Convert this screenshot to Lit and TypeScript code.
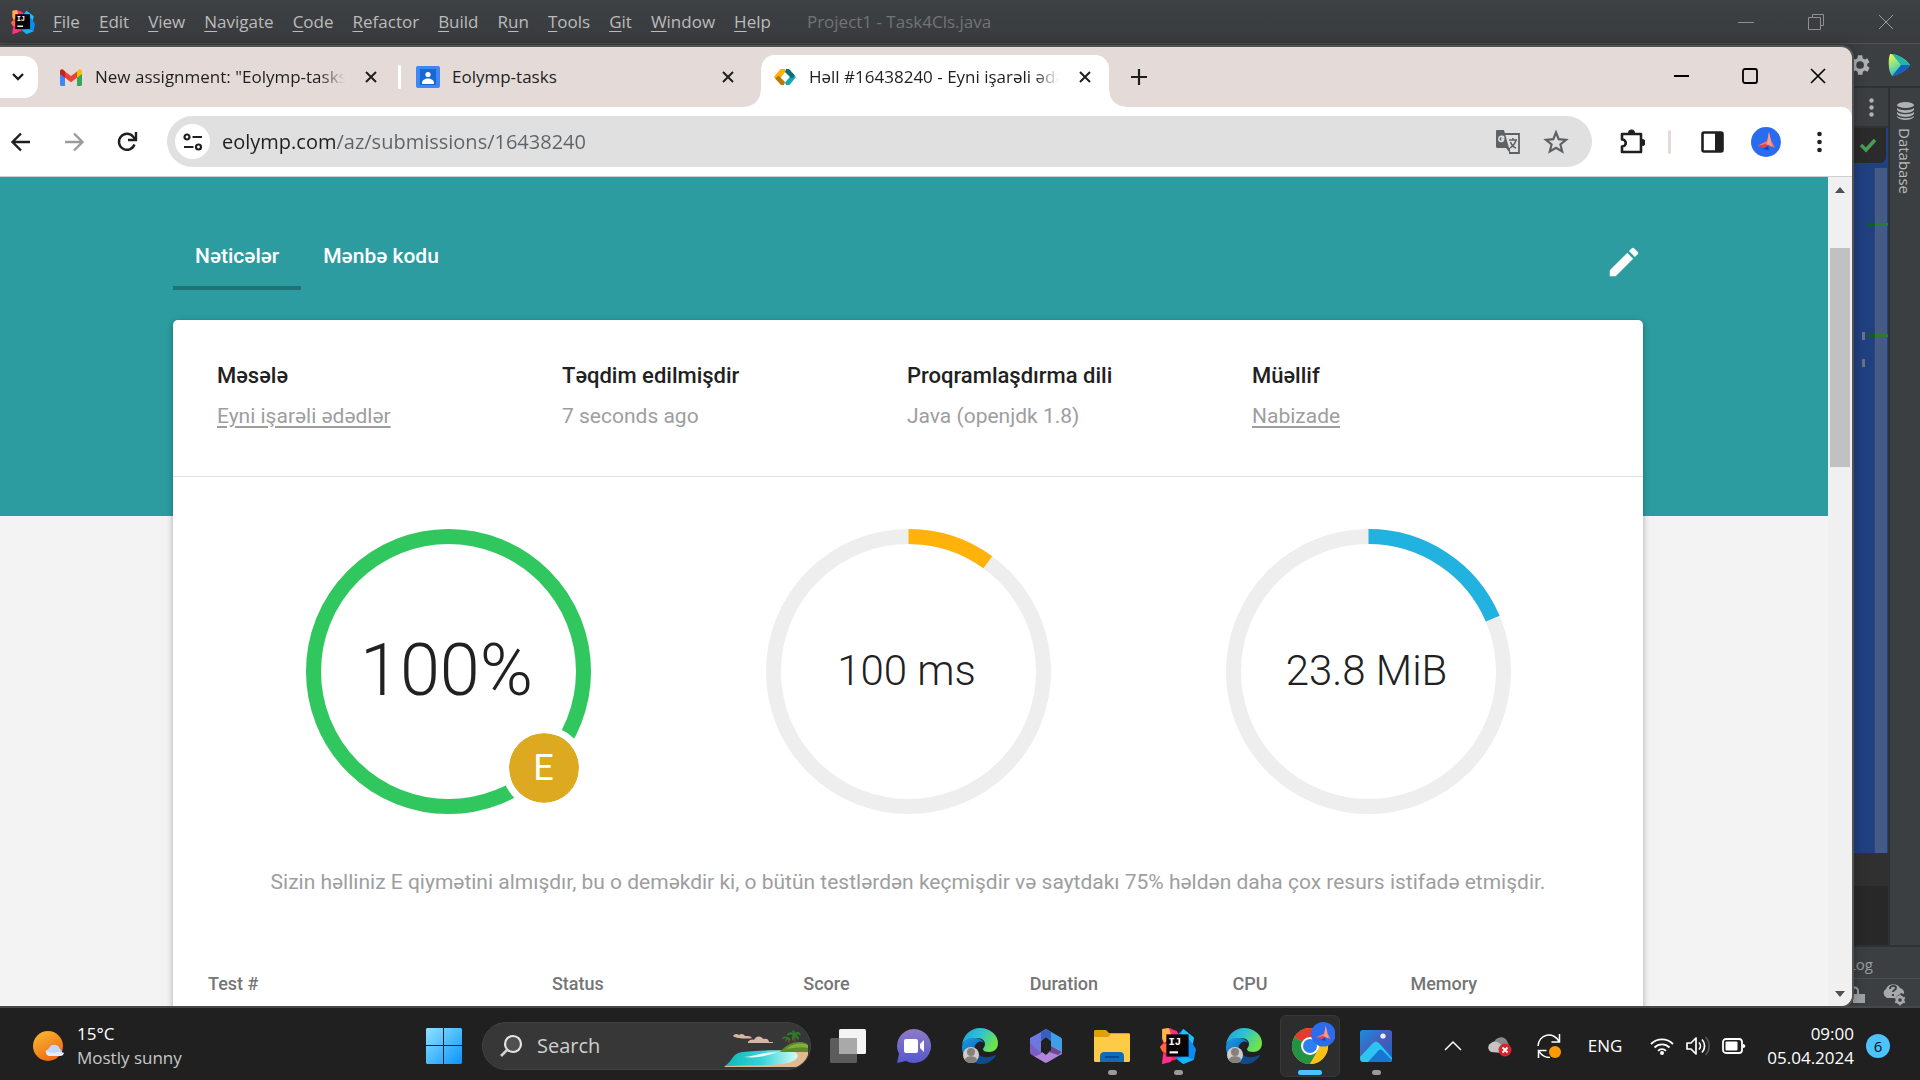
import { LitElement, html, svg, css, type SVGTemplateResult } from "lit";
import { customElement, property } from "lit/decorators.js";

const icon = (w: number, h: number, box: string, body: SVGTemplateResult) =>
  html`<svg width=${w} height=${h} viewBox=${box} fill="none" aria-hidden="true">${body}</svg>`;

/* ---------- shared artwork ---------- */

const ideLogo = (size: number) => icon(size, size, "0 0 34 34", svg`
  <path d="M2 1 9 0l8 8-2 22-4 1-9 3 1-11-3-5 3-4-1-4z" fill="#f9235f"/>
  <path d="M2 1 8 0l5 7-9 7-2-4z" fill="#fdb44a"/>
  <path d="M3 15h6v10l-7-3-2-4z" fill="#fc6c3b"/>
  <path d="M9 0l7 3 3 6-8 2z" fill="#fe2f7c"/>
  <path d="M17 6l5-5 5 4 5 4-1 6 3 5-2 10-10 4-7-5z" fill="#0a8bf5"/>
  <path d="M22 1l5 4 5 4-1 6-6-7-6-2z" fill="#19c3f7"/>
  <path d="M16 29l8-2 8 3-10 4z" fill="#12b5f5"/>
  <path d="M2 34l1-9 9 3-2 4z" fill="#ff318c"/>
  <rect x="6" y="6" width="21" height="21" fill="#0a0406"/>
  <text x="8" y="16" font-family="Liberation Mono, monospace" font-weight="700" font-size="10" fill="#fff">IJ</text>
  <rect x="9" y="22" width="8" height="2" fill="#fff"/>`);

const closeGlyph = icon(12, 12, "0 0 12 12", svg`<path d="M1 1l10 10M11 1L1 11" stroke="#1f1f1f" stroke-width="2"/>`);

const bird = svg`
  <circle cx="15" cy="15" r="15" fill="#2a6cf0"/>
  <path d="M6 19l10-5 2-9 2 8 4 8-6-3z" fill="#f9776b"/>
  <path d="M6 19l9-2 3 5z" fill="#d8455a"/>
  <path d="M18 5l-2 12 5 3z" fill="#ff9c8a"/>
  <path d="M12 22l5-3 1 4z" fill="#1846a8"/>`;

const edgeLogo = icon(36, 36, "0 0 36 36", svg`
  <defs>
    <linearGradient id="eg1" x1="0" y1="0" x2="1" y2="0.5"><stop offset="0" stop-color="#1b9de0"/><stop offset=".5" stop-color="#2fc2d0"/><stop offset="1" stop-color="#6fe34b"/></linearGradient>
    <linearGradient id="eg2" x1="0" y1="0" x2="0.6" y2="1"><stop offset="0" stop-color="#1a9fe6"/><stop offset="1" stop-color="#0a56ae"/></linearGradient>
  </defs>
  <path d="M0 17C1 7 9 0 18 0c10 0 18 7 18 15 0 6-4 9-9 9-4 0-6-1-6-3 0-1 2-2 2-5 0-4-4-6-8-6C8 10 2 12 0 17z" fill="url(#eg1)"/>
  <path d="M0 18c2-6 7-9 12-8 5 0 9 2 10 5-2-2-5-2-7 0-4 3-3 11 2 15 3 2 5 3 5 5-2 1-5 1-8 0C5 33-1 26 0 18z" fill="url(#eg2)"/>
  <path d="M14 20c0 6 6 10 12 9 3 0 5-1 7-2 1 0 1 1 0 2-4 5-10 8-16 7-4-3-6-10-3-16z" fill="#114a8b"/>
  <circle cx="9" cy="27" r="8" fill="#cfccc9"/><circle cx="9" cy="24" r="4" fill="#85807c"/>
  <path d="M3 32c0-5 12-5 12 0-3 4-9 4-12 0z" fill="#85807c"/>`);

/* ---------- IDE window behind the browser ---------- */

@customElement("ide-window")
export class IdeWindow extends LitElement {
  static styles = css`
    :host { display: flex; flex-direction: column; background: #3c3f41; color: #bbb;
      font: 17px/24px "Open Sans", "Noto Sans", sans-serif; min-width: 0; isolation: isolate; }
    button { all: unset; cursor: default; }
    svg { display: block; flex: none; }
    .title { height: 44px; display: flex; align-items: center; gap: 18px; padding: 0 26px 0 11px;
      background: linear-gradient(#3d4144, #393b3d); border-bottom: 1px solid #505254; box-sizing: border-box; }
    .menu { display: flex; gap: 19px; }
    .menu u { text-underline-offset: 3px; text-decoration-thickness: 1px; }
    .project { color: #717476; margin-left: 18px; }
    .frame { margin-left: auto; display: flex; align-items: center; gap: 54px; }
    .tools { height: 44px; display: flex; align-items: center; justify-content: flex-end; gap: 18px;
      padding-right: 10px; border-bottom: 2px solid #2f3132; box-sizing: border-box; }
    .body { flex: 1; display: flex; min-height: 0; }
    .left { flex: 1; display: flex; flex-direction: column; border-right: 2px solid #2f3132; }
    .tabs { height: 40px; display: flex; align-items: center; justify-content: flex-end; padding-right: 14px; border-bottom: 2px solid #313335; box-sizing: border-box; }
    .editor { flex: 1; display: flex; justify-content: flex-end; background: #204080; position: relative; }
    .inspect { position: absolute; top: 0; right: 2px; width: 60px; height: 35px; background: #2b2b2b;
      display: flex; align-items: center; justify-content: flex-end; padding-right: 9px; box-sizing: border-box; border-bottom-right-radius: 6px; }
    .track { width: 13px; margin: 40px 1px 0 0; background: #465a86; border-left: 1px solid #2d4577; box-sizing: border-box; }
    .mark { position: absolute; right: 0; width: 20px; height: 3px; background: linear-gradient(90deg, #0b6410 35%, #2d7a35 35%); }
    .mark.one { top: 95px; } .mark.two { top: 206px; }
    .dash { position: absolute; right: 23px; width: 3px; height: 8px; background: #69748a; }
    .dash.one { top: 204px; } .dash.two { top: 231px; }
    .gutter { height: 33px; background: #303030; }
    .console { height: 59px; background: #282828; }
    .stripe { width: 30px; display: flex; flex-direction: column; align-items: center; padding-top: 14px; gap: 8px; box-sizing: border-box; }
    .stripe span { writing-mode: vertical-rl; font-size: 15px; line-height: 20px; }
    .log { height: 34px; display: flex; align-items: center; justify-content: flex-end; padding: 2px 47px 0 0;
      border-top: 2px solid #2f3132; border-bottom: 1px solid #4b4e50; box-sizing: border-box; font-size: 15px; color: #9b9d9e; }
    .status { height: 27px; display: flex; align-items: center; justify-content: flex-end; gap: 17px; padding: 4px 14px 0 0; box-sizing: border-box; }
  `;

  private menus = ["File", "Edit", "View", "Navigate", "Code", "Refactor", "Build", "Run", "Tools", "Git", "Window", "Help"];

  private menuItem(name: string) {
    const at = name === "Run" ? 1 : 0;
    return html`<button>${name.slice(0, at)}<u>${name[at]}</u>${name.slice(at + 1)}</button>`;
  }

  render() {
    return html`
      <header class="title">
        ${ideLogo(24)}
        <nav class="menu">${this.menus.map((m) => this.menuItem(m))}</nav>
        <span class="project">Project1 - Task4Cls.java</span>
        <div class="frame">
          <button aria-label="Minimize">${icon(16, 16, "0 0 16 16", svg`<path d="M0 8.500h16" stroke="#8d8f90"/>`)}</button>
          <button aria-label="Restore">${icon(16, 16, "0 0 16 16", svg`<path d="M.5 3.500h12v12H.500zM4.500 3V.500h11v11H13" stroke="#8d8f90"/>`)}</button>
          <button aria-label="Close">${icon(16, 16, "0 0 16 16", svg`<path d="M1 1l14 14M15 1L1 15" stroke="#9a9c9d"/>`)}</button>
        </div>
      </header>
      <div class="tools">
        ${icon(22, 22, "2 2 20 20", svg`<path fill="#afb1b3" fill-rule="evenodd" d="M19.400 13a7 7 0 0 0 0-2l2.100-1.600-2-3.500-2.500 1a7 7 0 0 0-1.700-1L15 3.200h-4l-.4 2.700a7 7 0 0 0-1.700 1l-2.500-1-2 3.500L6.600 11a7 7 0 0 0 0 2l-2.100 1.600 2 3.500 2.500-1a7 7 0 0 0 1.700 1l.4 2.700h4l.4-2.700a7 7 0 0 0 1.700-1l2.500 1 2-3.500zM13 15.500a3.500 3.500 0 1 1 0-7 3.500 3.500 0 0 1 0 7z"/>`)}
        ${icon(22, 24, "0 0 22 24", svg`
          <defs><linearGradient id="tb" x1="0" y1="0" x2=".6" y2="1"><stop offset="0" stop-color="#fcf84a"/><stop offset=".5" stop-color="#7fe08c"/><stop offset="1" stop-color="#16a9e8"/></linearGradient></defs>
          <path d="M2 1C0 6 0 18 4 23c8-2 15-6 18-11C17 5 9 1 2 1z" fill="url(#tb)"/>
          <path d="M13 12h9c-4 6-10 9-18 11z" fill="#1062c4"/><path d="M4 1l9 11h9C17 6 11 2 4 1z" fill="#1fb8a8"/>`)}
      </div>
      <div class="body">
        <div class="left">
          <div class="tabs">${icon(5, 19, "0 0 5 19", svg`<g fill="#afb1b3"><circle cx="2.500" cy="2.500" r="2.200"/><circle cx="2.500" cy="9.500" r="2.200"/><circle cx="2.500" cy="16.500" r="2.200"/></g>`)}</div>
          <div class="editor">
            <div class="track"></div>
            <div class="inspect">${icon(18, 15, "0 0 18 15", svg`<path d="M2 7l5 5L16 2" stroke="#499c54" stroke-width="3.500"/>`)}</div>
            <i class="mark one"></i><i class="mark two"></i><i class="dash one"></i><i class="dash two"></i>
          </div>
          <div class="gutter"></div>
          <div class="console"></div>
        </div>
        <aside class="stripe">
          ${icon(17, 18, "0 0 17 18", svg`<ellipse cx="8.500" cy="3" rx="8.500" ry="3" fill="#afb1b3"/><path d="M0 6c3 3 14 3 17 0v2c-3 4-14 4-17 0zM0 10c3 3 14 3 17 0v2c-3 4-14 4-17 0zM0 14c3 3 14 3 17 0v1c-3 4-14 4-17 0z" fill="#afb1b3"/>`)}
          <span>Database</span>
        </aside>
      </div>
      <div class="log">Log</div>
      <div class="status">
        ${icon(15, 18, "0 0 15 18", svg`<path d="M1 8V5a3.500 3.500 0 0 1 7 0v4" stroke="#9fa1a2" stroke-width="2"/><path d="M3 8h12v9H3z" fill="#9fa1a2"/>`)}
        ${icon(24, 22, "0 0 24 22", svg`<path d="M5 14a5 5 0 0 1-1-9 8 8 0 0 1 14-1 5 5 0 0 1 4 6l-3-1-6 5z" fill="#a7a9aa"/>
          <path d="M8 5c0-4 6-4 6-1 0 2-3 2-3 4M11 10v2" stroke="#3c3f41" stroke-width="2"/>
          <circle cx="18" cy="16" r="3.300" stroke="#a7a9aa" stroke-width="2.500"/><path d="M18 10.500v11M13 13.500l10 5M23 13.500l-10 5" stroke="#a7a9aa" stroke-width="1.600"/><circle cx="18" cy="16" r="1.800" fill="#3c3f41"/>`)}
      </div>`;
  }
}

/* ---------- ring gauge ---------- */

@customElement("ring-gauge")
export class RingGauge extends LitElement {
  @property({ type: Number }) value = 0;
  @property() color = "#000";
  @property() label = "";
  @property() grade = "";

  static styles = css`
    :host { display: grid; position: relative; width: 285px; height: 285px; place-items: center; }
    svg, .text { grid-area: 1 / 1; }
    .text { font-weight: 300; font-size: 42px; line-height: 52px; color: #212121; padding: 0 3px 2px 0; }
    .text.big { font-size: 72px; line-height: 84px; }
    .grade { position: absolute; right: 5px; bottom: 4px; width: 70px; height: 70px; border: 7px solid #fff; border-radius: 50%;
      background: #dda920 padding-box; color: #fff; font-size: 36px; line-height: 70px; text-align: center; }
  `;

  render() {
    return html`
      <svg width="285" height="285" viewBox="0 0 285 285" fill="none" stroke-width="15" aria-hidden="true">
        <circle cx="142.500" cy="142.500" r="135" stroke="#eee" />
        <circle cx="142.500" cy="142.500" r="135" stroke=${this.color} pathLength="100"
          stroke-dasharray="${this.value} ${100 - this.value}" transform="rotate(-90 142.500 142.500)" />
      </svg>
      <span class="text ${this.grade ? "big" : ""}">${this.label}</span>
      ${this.grade ? html`<span class="grade">${this.grade}</span>` : null}`;
  }
}

/* ---------- submission page ---------- */

@customElement("submission-page")
export class SubmissionPage extends LitElement {
  static styles = css`
    :host { display: block; overflow: hidden; min-width: 0; padding: 45px 12px 0 0;
      background: linear-gradient(#2c9ca0 339px, #f3f3f3 339px); font: 21px/30px Roboto, sans-serif; color: #212121; }
    .wrap { max-width: 1470px; margin: 0 auto; }
    .top { display: flex; align-items: center; justify-content: space-between; }
    nav { display: flex; }
    .tab { color: #fff; text-decoration: none; font-weight: 500; padding: 19px 22px 15px 22px; border-bottom: 4px solid transparent; }
    .tab.on { border-color: #207478; }
    .edit { all: unset; margin-top: 12px; }
    svg { display: block; }
    .card { margin-top: 30px; background: #fff; border-radius: 5px; box-shadow: 0 2px 6px rgba(0, 0, 0, .3); padding-bottom: 80px; }
    dl { margin: 0; display: grid; grid-template-columns: repeat(4, 1fr); padding: 36px 46px 40px 44px; line-height: 40px; border-bottom: 1px solid #e0e0e0; }
    dt { font-weight: 500; font-size: 22px; }
    dd { margin: 0; color: #9e9e9e; }
    dd a { color: inherit; text-underline-offset: 3px; }
    .gauges { display: grid; grid-template-columns: repeat(3, 1fr); justify-items: center; padding: 52px 45px 0; }
    p { margin: 53px 0 0; text-align: center; color: #9e9e9e; }
    table { width: 100%; margin-top: 63px; border-collapse: collapse; table-layout: fixed; font-size: 18px; line-height: 24px; color: #757575; }
    th { box-sizing: border-box; text-align: left; font-weight: 500; padding: 12px 0 12px 35px; }
    .c1 { width: 23.4%; } .c2 { width: 17.1%; } .c3 { width: 15.4%; } .c4 { width: 13.8%; } .c5 { width: 12.1%; }
  `;

  render() {
    return html`
      <div class="wrap">
        <div class="top">
          <nav><a class="tab on" href="#results">Nəticələr</a><a class="tab" href="#source">Mənbə kodu</a></nav>
          <button class="edit" aria-label="Redaktə et">${icon(38, 38, "0 0 24 24", svg`<path fill="#fff" d="M3 17.250V21h3.750L17.810 9.940l-3.750-3.750L3 17.250zM20.710 7.040a1 1 0 0 0 0-1.410l-2.340-2.340a1 1 0 0 0-1.410 0l-1.830 1.830 3.750 3.750 1.830-1.830z"/>`)}</button>
        </div>
        <main class="card">
          <dl>
            <div><dt>Məsələ</dt><dd><a href="#problem">Eyni işarəli ədədlər</a></dd></div>
            <div><dt>Təqdim edilmişdir</dt><dd>7 seconds ago</dd></div>
            <div><dt>Proqramlaşdırma dili</dt><dd>Java (openjdk 1.8)</dd></div>
            <div><dt>Müəllif</dt><dd><a href="#author">Nabizade</a></dd></div>
          </dl>
          <div class="gauges">
            <ring-gauge value="100" color="#30c75e" label="100%" grade="E"></ring-gauge>
            <ring-gauge value="10" color="#ffb20a" label="100 ms"></ring-gauge>
            <ring-gauge value="18.600" color="#22b2e0" label="23.8 MiB"></ring-gauge>
          </div>
          <p>Sizin həlliniz E qiymətini almışdır, bu o deməkdir ki, o bütün testlərdən keçmişdir və saytdakı 75% həldən daha çox resurs istifadə etmişdir.</p>
          <table>
            <thead><tr>
              <th class="c1">Test #</th><th class="c2">Status</th><th class="c3">Score</th>
              <th class="c4">Duration</th><th class="c5">CPU</th><th>Memory</th>
            </tr></thead>
          </table>
        </main>
      </div>`;
  }
}

/* ---------- browser window ---------- */

@customElement("browser-window")
export class BrowserWindow extends LitElement {
  static styles = css`
    :host { display: flex; flex-direction: column; background: #e4dbd8; border-radius: 0 11px 11px 0; overflow: hidden;
      box-shadow: 0 0 0 2px #505254, 0 0 14px rgba(0, 0, 0, .4); font: 17px/24px "Open Sans", "Noto Sans", sans-serif; color: #1f1f1f; min-width: 0; }
    button { all: unset; cursor: default; display: grid; place-items: center; flex: none; }
    svg { display: block; flex: none; }
    .strip { height: 60px; display: flex; padding-top: 8px; box-sizing: border-box; }
    .search-tabs { width: 38px; height: 42px; margin-top: 1px; background: #fff; border-radius: 0 14px 14px 0; padding-right: 3px; box-sizing: border-box; }
    .tab { display: flex; align-items: center; height: 44px; box-sizing: border-box; min-width: 0; }
    .tab .name { flex: 1; white-space: nowrap; overflow: hidden; }
    .tab.mail { width: 344px; padding: 0 0 0 22px; gap: 13px; margin-right: 16px; }
    .tab.class { width: 346px; padding: 0 13px 0 15px; gap: 12px; margin-right: 14px; }
    .tab.mail .name, .tab.active .name { -webkit-mask-image: linear-gradient(90deg, #000 225px, transparent 250px); }
    .tab.mail .name { flex: 0 0 250px; }
    .sep { width: 3px; height: 24px; border-radius: 2px; background: #fff; }
    .tab.active { width: 348px; height: 52px; background: #fff; border-radius: 14px 14px 0 0; padding: 0 18px 8px 13px; gap: 13px; position: relative; }
    .tab.active .name { flex: 0 0 250px; }
    .tab.active button { margin-left: auto; }
    .tab.active::before, .tab.active::after { content: ""; position: absolute; bottom: 0; width: 16px; height: 16px; }
    .tab.active::before { right: 100%; background: radial-gradient(circle at 0 0, transparent 15px, #fff 16px); }
    .tab.active::after { left: 100%; background: radial-gradient(circle at 100% 0, transparent 15px, #fff 16px); }
    .tab.mail button { margin-left: 7px; }
    .plus { width: 20px; height: 44px; margin-left: 20px; }
    .window { margin-left: auto; display: flex; gap: 52px; padding-right: 26px; height: 42px; }
    .bar { height: 70px; background: #fff; border-bottom: 1px solid #cfcfcf; border-radius: 0 10px 0 0; box-sizing: border-box;
      display: flex; align-items: center; padding: 0 30px 0 10px; }
    .nav { display: flex; gap: 31px; margin-right: 29px; }
    .omni { flex: 1; height: 51px; border-radius: 26px; background: #e0e0e0; display: flex; align-items: center; padding: 0 23px 0 8px; min-width: 0; }
    .site { width: 35px; height: 35px; border-radius: 50%; background: #fff; }
    .omni input { all: unset; flex: 1; min-width: 0; margin-left: 12px; font-size: 20px; line-height: 30px; color: transparent;
      background: linear-gradient(90deg, #1f1f1f 113px, #5f6265 113px); -webkit-background-clip: text; background-clip: text; }
    .page-tools { display: flex; gap: 22px; align-items: center; }
    .right { display: flex; align-items: center; margin-left: 27px; }
    .line { width: 3px; height: 24px; border-radius: 2px; background: #e4dbd8; margin: 0 30px 0 23px; }
    .panel { margin-right: 27px; } .me { margin-right: 36px; }
    .view { flex: 1; display: flex; min-height: 0; }
    submission-page { flex: 1; }
    .scroll { width: 24px; background: #f0f0f0; display: flex; flex-direction: column; align-items: center; padding: 10px 0 9px; box-sizing: border-box; }
    .thumb { width: 20px; height: 219px; background: #c1c1c1; margin-top: 55px; }
    .down { margin-top: auto; }
  `;

  render() {
    return html`
      <div class="strip">
        <button class="search-tabs" aria-label="Search tabs">${icon(14, 10, "0 0 14 10", svg`<path d="M2 2l5 5 5-5" stroke="#1f1f1f" stroke-width="2.400"/>`)}</button>
        <div class="tab mail">
          ${icon(22, 17, "0 0 22 17", svg`<path d="M0 3l5 3v11H1.500A1.500 1.500 0 0 1 0 15.500z" fill="#4285f4"/><path d="M22 3l-5 3v11h3.500a1.500 1.500 0 0 0 1.500-1.500z" fill="#34a853"/><path d="M5 2.500l6 4.500 6-4.500v6.300L11 13.300 5 8.800z" fill="#ea4335"/><path d="M17 2.300l1.800-1.500C20.200-.3 22 .7 22 2.500V5l-5 3.800z" fill="#fbbc04"/><path d="M5 2.300L3.200.800C1.800-.3 0 .7 0 2.500V5l5 3.800z" fill="#c5221f"/>`)}
          <span class="name">New assignment: "Eolymp-tasks"</span>
          <button aria-label="Close tab">${closeGlyph}</button>
        </div>
        <div class="tab"><i class="sep"></i></div>
        <div class="tab class">
          ${icon(24, 22, "0 0 24 22", svg`<rect width="24" height="22" rx="2" fill="#4285f4"/><rect x="4" y="3" width="16" height="16" fill="#1967d2"/><circle cx="12" cy="8.500" r="2.600" fill="#fff"/><path d="M6 17c0-6 12-6 12 0v1H6z" fill="#fff"/>`)}
          <span class="name">Eolymp-tasks</span>
          <button aria-label="Close tab">${closeGlyph}</button>
        </div>
        <div class="tab active">
          ${icon(22, 16, "0 0 22 16", svg`<path d="M6.500 0H11L7 8l-2.500 3.500L0 8z" fill="#fdb913"/><path d="M7 0h3.500l1 2.500L4 12 0 8z" fill="#ffb300"/><path d="M4.500 6.500L11 13l-1 3H7L1 9.500z" fill="#b97a08"/><path d="M15.500 16H12l-1-2.500 7-8L22 8z" fill="#12a9b4"/><path d="M17.500 9.500L11 3l1-3h3l6 6.500z" fill="#0b7078"/>`)}
          <span class="name">Həll #16438240 - Eyni işarəli ədədlər</span>
          <button aria-label="Close tab">${closeGlyph}</button>
        </div>
        <button class="plus" aria-label="New tab">${icon(16, 16, "0 0 16 16", svg`<path d="M8 0v16M0 8h16" stroke="#1f1f1f" stroke-width="2.200"/>`)}</button>
        <div class="window">
          <button aria-label="Minimize">${icon(16, 16, "0 0 16 16", svg`<path d="M0 8h15" stroke="#000" stroke-width="2"/>`)}</button>
          <button aria-label="Maximize">${icon(16, 16, "0 0 16 16", svg`<rect x="1" y="1" width="14" height="14" rx="2" stroke="#000" stroke-width="1.800"/>`)}</button>
          <button aria-label="Close">${icon(16, 16, "0 0 16 16", svg`<path d="M1 1l14 14M15 1L1 15" stroke="#000" stroke-width="1.700"/>`)}</button>
        </div>
      </div>
      <div class="bar">
        <div class="nav">
          <button aria-label="Back">${icon(22, 22, "0 0 22 22", svg`<path d="M20 11H3M11 2.500L2.500 11l8.500 8.500" stroke="#1f1f1f" stroke-width="2.400"/>`)}</button>
          <button aria-label="Forward">${icon(22, 22, "0 0 22 22", svg`<path d="M2 11h17M11 2.500l8.500 8.500-8.500 8.500" stroke="#9b9b9b" stroke-width="2.400"/>`)}</button>
          <button aria-label="Reload">${icon(22, 22, "0 0 22 22", svg`<path d="M18.500 13.500a8 8 0 1 1-1.500-8l2 2.500" stroke="#1f1f1f" stroke-width="2.400"/><path d="M20 1v8h-8" stroke="#1f1f1f" stroke-width="2.400"/>`)}</button>
        </div>
        <div class="omni">
          <button class="site" aria-label="Site information">${icon(20, 18, "0 0 20 18", svg`<g stroke="#1f1f1f" stroke-width="2.200"><circle cx="4" cy="4" r="2.500"/><path d="M9.500 4H19"/><circle cx="15.500" cy="14" r="2.500"/><path d="M1 14h9.500"/></g>`)}</button>
          <input aria-label="Address" value="eolymp.com/az/submissions/16438240" />
          <div class="page-tools">
            <button aria-label="Translate">${icon(26, 26, "0 0 26 26", svg`<path d="M10 5h14v19H14" stroke="#5f6265" stroke-width="1.800"/><path d="M2 1h7l5 18H2a2 2 0 0 1-1-1V2a1 1 0 0 1 1-1z" fill="#5f6265"/><path d="M9.500 9H7v1.800h1.500C8 13.500 3.800 13 3.800 10S7.500 6.500 9 8" stroke="#e0e0e0" stroke-width="1.500"/><path d="M14 11h8M18 9v2M21 11c-1 4-3 6-6 8M15.500 13c1 3 3 5 5.500 6" stroke="#5f6265" stroke-width="1.500"/><path d="M11 19l4 5 0-5z" fill="#5f6265"/>`)}</button>
            <button aria-label="Bookmark">${icon(26, 26, "0 0 26 26", svg`<path d="M13 3.500l2.700 6.700 7.300.6-5.600 4.700 1.800 7-6.200-3.800-6.200 3.800 1.800-7L3 10.800l7.300-.6z" stroke="#5f6265" stroke-width="2.200"/>`)}</button>
          </div>
        </div>
        <div class="right">
          <button aria-label="Extensions">${icon(26, 26, "0 0 26 26", svg`<path d="M3 5h19v18H3v-5.500c5 0 5-7 0-7z" stroke="#1f1f1f" stroke-width="2.600" stroke-linejoin="round"/><path d="M9 4a3.500 3.500 0 0 1 7 0zM23 10a3.500 3.500 0 0 1 0 7z" fill="#1f1f1f"/>`)}</button>
          <i class="line"></i>
          <button class="panel" aria-label="Side panel">${icon(23, 22, "0 0 23 22", svg`<rect x="1.500" y="1.500" width="20" height="19" rx="1.500" stroke="#1f1f1f" stroke-width="2.600"/><path d="M14 1h8v20h-8z" fill="#1f1f1f"/>`)}</button>
          <button class="me" aria-label="Profile">${icon(30, 30, "0 0 30 30", bird)}</button>
          <button aria-label="Menu">${icon(5, 22, "0 0 5 22", svg`<g fill="#1f1f1f"><circle cx="2.500" cy="3" r="2.300"/><circle cx="2.500" cy="11" r="2.300"/><circle cx="2.500" cy="19" r="2.300"/></g>`)}</button>
        </div>
      </div>
      <div class="view">
        <submission-page></submission-page>
        <div class="scroll" aria-hidden="true">
          ${icon(10, 6, "0 0 10 6", svg`<path d="M0 6l5-6 5 6z" fill="#505050"/>`)}
          <div class="thumb"></div>
          <div class="down">${icon(10, 6, "0 0 10 6", svg`<path d="M0 0l5 6 5-6z" fill="#505050"/>`)}</div>
        </div>
      </div>`;
  }
}

/* ---------- taskbar ---------- */

@customElement("task-bar")
export class TaskBar extends LitElement {
  static styles = css`
    :host { display: flex; height: 74px; box-sizing: border-box; background: #202020; border-top: 2px solid #474747; color: #fff;
      font: 17px/24px "Open Sans", "Noto Sans", sans-serif; align-items: center; padding-top: 3px; }
    button { all: unset; cursor: default; display: grid; place-items: center; flex: none; }
    svg { display: block; flex: none; }
    .weather { width: 411px; box-sizing: border-box; padding-left: 32px; display: flex; align-items: center; gap: 13px; }
    .weather small { display: block; font-size: 17px; color: #c8c8c8; }
    .cell { width: 66px; height: 62px; position: relative; }
    .cell.run::after { content: ""; position: absolute; left: 29px; bottom: 2px; width: 9px; height: 5px; border-radius: 3px; background: #9a9a9a; }
    .cell.on::before { content: ""; position: absolute; inset: 0 3px; border-radius: 6px; background: #2d2d2d; border: 1px solid #383838; }
    .cell.on::after { left: 21px; width: 24px; background: #4cc2ff; }
    .cell svg { position: relative; }
    .search { width: 329px; height: 48px; margin: 0 4px 0 5px; background: #373737; border: 1px solid #414141; border-radius: 24px; box-sizing: border-box;
      display: flex; align-items: center; padding: 0 0 0 16px; gap: 14px; overflow: hidden; }
    .search input { all: unset; flex: 1; min-width: 0; font-size: 20px; }
    .search input::placeholder { color: #cfcfcf; }
    .tray { margin-left: auto; display: flex; align-items: center; padding-right: 30px; }
    .arrow { margin-right: 25px; } .cloud { margin-right: 24px; }
    .lang { margin: 0 28px 0 27px; }
    .status { display: flex; align-items: center; gap: 12px; }
    .clock { text-align: right; margin: 0 12px 0 21px; white-space: nowrap; }
    .count { width: 24px; height: 24px; border-radius: 50%; background: #4cc2ff; color: #101010; font-size: 15px; line-height: 24px; text-align: center; }
  `;

  render() {
    return html`
      <div class="weather">
        ${icon(32, 32, "0 0 32 32", svg`<defs><linearGradient id="sun" x1="0" y1="0" x2=".6" y2="1"><stop offset="0" stop-color="#f6bd35"/><stop offset="1" stop-color="#f26a10"/></linearGradient></defs><circle cx="16" cy="16" r="15" fill="url(#sun)"/><path d="M17 26a4.500 4.500 0 0 1 0-8 6 6 0 0 1 11 1 4 4 0 0 1 0 7z" fill="#c3d6f6"/><path d="M17 26a4.500 4.500 0 0 1-3-6c3 3 8 4 12 2 3 0 5 0 6 1a4 4 0 0 1-4 3z" fill="#dfeafc"/>`)}
        <div>15°C<small>Mostly sunny</small></div>
      </div>
      <button class="cell" aria-label="Start">${icon(36, 36, "0 0 36 36", svg`<defs><linearGradient id="win" x1="0" y1="0" x2="1" y2="1"><stop offset="0" stop-color="#8ee3ff"/><stop offset="1" stop-color="#0a93fb"/></linearGradient></defs><path d="M1 0h16v17H0V1zM18 0h17l1 1v16H18zM0 18h17v18H1l-1-1zM18 18h18v17l-1 1H18z" fill="url(#win)"/>`)}</button>
      <label class="search">
        ${icon(24, 24, "0 0 24 24", svg`<circle cx="14" cy="10" r="8" stroke="#e4e4e4" stroke-width="2.200" fill="#505050"/><path d="M8 16l-6 6" stroke="#d0d0d0" stroke-width="2.600"/>`)}
        <input type="search" placeholder="Search" aria-label="Search" />
        ${icon(86, 46, "0 0 86 46", svg`
          <defs><linearGradient id="sea" x1="0" y1="0" x2="1" y2="0"><stop offset="0" stop-color="#0bb8b6"/><stop offset=".5" stop-color="#35d3d8"/><stop offset="1" stop-color="#d5fbf4"/></linearGradient></defs>
          <path d="M9 13c1-2 4-3 6-1 2-2 5-1 6 1 3 0 6 0 7 2-3 1-15 1-19-2zM24 19c1-2 4-3 6-2 2-5 8-4 9-1 3-1 6 0 6 3h4v1H24z" fill="#d9b5a5"/>
          <path d="M0 44c8-6 20-14 60-16h24v12l-4 4z" fill="#e3b98f"/>
          <path d="M1 43c4-3 6-6 9-10 4-5 12-4 22-5 15-1 30-1 38 1 8 3 2 9-6 11-14 3-40 2-63 3z" fill="url(#sea)"/>
          <path d="M20 34c10 0 20-6 34-4-8 0-15 6-34 4z" fill="#e9fffd"/>
          <path d="M56 29c6-7 12-10 19-10 6 0 9 2 9 4v6z" fill="#5c8a2a"/><path d="M62 26c6-5 14-7 22-4v3c-8-2-15 0-22 1z" fill="#83ad3c"/>
          <path d="M71 20c0-5 0-8-2-10M65 20c0-4-1-5-3-6" stroke="#7a4d22" stroke-width="1.300"/>
          <path d="M69 10c-3-2-6 0-6 3 3-2 5-1 6-1-2 3-1 5 0 6 1-2 1-4 1-5 2 1 4 3 4 5 2-3 0-6-2-6 2-1 4 0 5 1 0-4-4-5-6-3 0-2-1-3-3-2zM62 14c-2-1-4 0-4 2l4-1-1 4 3-3 3 2c0-2-2-4-5-4z" fill="#2c7d2b"/>`)}
      </label>
      <button class="cell" aria-label="Task view">${icon(36, 34, "0 0 36 34", svg`<rect x="9" width="27" height="25" rx="1.500" fill="#f4f4f4"/><rect y="9" width="27" height="25" rx="1.500" fill="#5c5c5c"/><path d="M9 9h18v16H9z" fill="#a9a9a9"/>`)}</button>
      <button class="cell" aria-label="Chat">${icon(34, 34, "0 0 34 34", svg`<defs><linearGradient id="chat" x1="0" y1="0" x2="0" y2="1"><stop offset="0" stop-color="#8f7ac6"/><stop offset="1" stop-color="#5558cd"/></linearGradient></defs><path d="M17 0a17 17 0 1 1-8 32l-9 2 2-9A17 17 0 0 1 17 0z" fill="url(#chat)"/><rect x="7" y="10" width="14" height="14" rx="2" fill="#fff"/><path d="M23 15l4-4v12l-4-4z" fill="#fff"/>`)}</button>
      <button class="cell" aria-label="Edge">${edgeLogo}</button>
      <button class="cell" aria-label="Microsoft 365">${icon(32, 34, "0 0 32 34", svg`
        <path d="M11 3l5-3 3 2-8 10v12l-2 3-8-4c-1-1-1-1-1-2V9z" fill="#6f78e0"/>
        <path d="M0 22V14l10 9 2 2 4 1v8l-14-8c-2-1-2-2-2-4z" fill="#7b5ec4"/>
        <path d="M16 0l14 8c2 1 2 2 2 3v13l-11-6v-6l-5-4-5 4V3z" fill="#3f9fe6"/><path d="M16 0l5 3v9l-5-4-5 4V3z" fill="#3a5fc0"/>
        <path d="M32 22v2c0 1-1 2-2 2l-12 7c-1 1-3 1-4 0L4 27c4 0 7-2 8-4l4 3 5-5v-4l11 5z" fill="#b085dc"/><path d="M21 17l11 6-4 3-9-3 2-2z" fill="#6b4a94"/>
        <path d="M16 10l5 3v8l-5 4-5-4v-8z" fill="#202020"/>`)}</button>
      <button class="cell run" aria-label="File Explorer">${icon(36, 34, "0 0 36 34", svg`<path d="M0 2l1-1h11l3 3h20l1 1v6H0z" fill="#e0a007"/><path d="M0 8h14l3-3h18l1 1v26l-1 1H1l-1-1z" fill="#fdcb45"/><path d="M6 33V27c0-3 2-4 4-4h16c3 0 4 2 4 4v6z" fill="#0f6cbd"/><path d="M11 28h14" stroke="#0a4a8a" stroke-width="2"/>`)}</button>
      <button class="cell run" aria-label="IntelliJ IDEA">${ideLogo(36)}</button>
      <button class="cell" aria-label="Edge profile">${edgeLogo}</button>
      <button class="cell run on" aria-label="Chrome">${icon(50, 48, "0 0 50 48", svg`
        <circle cx="25" cy="24" r="18" fill="#fbc116"/>
        <path d="M25 24L9.400 15A18 18 0 0 1 40.600 15z" fill="#e33b2e"/>
        <path d="M9.400 15A18 18 0 0 0 25 42l8-13.500L25 24z" fill="#229342"/>
        <path d="M40.600 15a18 18 0 0 1-15.600 27l8-14V15z" fill="#fbc116"/>
        <circle cx="25" cy="24" r="9" fill="#fff"/><circle cx="25" cy="24" r="7" fill="#2f80ee"/>
        <g transform="translate(26 0) scale(.82)">${bird}</g>`)}</button>
      <button class="cell run" aria-label="Photos">${icon(32, 32, "0 0 32 32", svg`<defs><linearGradient id="ph" x1="0" y1="0" x2="1" y2="1"><stop offset="0" stop-color="#1590e8"/><stop offset=".5" stop-color="#4a5cb8"/><stop offset="1" stop-color="#1466c8"/></linearGradient></defs><rect width="32" height="32" rx="3" fill="url(#ph)"/><path d="M0 27L13 13c2-2 4-2 6 0l13 15c0 3-1 4-3 4H3c-2 0-3-2-3-5z" fill="#2cc4f2"/><path d="M8 32l10-11c2-2 3-2 5 0l9 9-3 2z" fill="#1576d3"/><circle cx="23" cy="6" r="2.600" fill="#e8f4ff"/>`)}</button>
      <div class="tray">
        <button class="arrow" aria-label="Show hidden icons">${icon(18, 12, "0 0 18 12", svg`<path d="M1 10l8-8 8 8" stroke="#fff" stroke-width="1.500"/>`)}</button>
        <button class="cloud" aria-label="OneDrive">${icon(26, 22, "0 0 26 22", svg`<path d="M7 8a7 7 0 0 1 13-2l3 6-10 2z" fill="#8a8a8a"/><path d="M4 17a5 5 0 0 1 0-9 7 7 0 0 1 8 0l6 4-3 6z" fill="#c4c4c4"/><circle cx="18" cy="15" r="6.500" fill="#d9232e"/><path d="M15.500 12.500l5 5M20.500 12.500l-5 5" stroke="#fff" stroke-width="1.800"/>`)}</button>
        <button aria-label="Updates">${icon(24, 24, "0 0 24 24", svg`<path d="M1 12A11 11 0 0 1 22 7.500M22.500 0v8h-8M13 23.500C8 23.500 4 21 2 17M1.500 24v-7.500h8" stroke="#fff" stroke-width="1.500"/><circle cx="18" cy="18" r="6" fill="#ff9a00"/>`)}</button>
        <span class="lang">ENG</span>
        <button class="status" aria-label="Network, sound and battery">
          ${icon(24, 18, "0 0 24 18", svg`<g stroke="#fff" stroke-width="1.800"><path d="M1 7a15.500 15.500 0 0 1 22 0M4.500 10.500a10.500 10.500 0 0 1 15 0M8 13.800a5.700 5.700 0 0 1 8 0"/></g><circle cx="12" cy="16" r="2" fill="#fff"/>`)}
          ${icon(24, 20, "0 0 24 20", svg`<path d="M1 7h4l5-5v16l-5-5H1z" stroke="#fff" stroke-width="1.700" stroke-linejoin="round"/><path d="M13 6.500a5 5 0 0 1 0 7M16 3.500a9.500 9.500 0 0 1 0 13" stroke="#fff" stroke-width="1.700"/><path d="M19.500 1a13 13 0 0 1 0 18" stroke="#555" stroke-width="1.700"/>`)}
          ${icon(24, 16, "0 0 24 16", svg`<rect x="1" y="1" width="19" height="14" rx="3" stroke="#fff" stroke-width="1.800"/><rect x="3.500" y="3.500" width="12" height="9" rx="1" fill="#fff"/><path d="M21 6c3 0 3 4 0 4z" fill="#fff"/>`)}
        </button>
        <div class="clock">09:00<br />05.04.2024</div>
        <span class="count">6</span>
      </div>`;
  }
}

/* ---------- desktop ---------- */

@customElement("app-root")
export class AppRoot extends LitElement {
  static styles = css`
    :host { display: flex; flex-direction: column; height: 100vh; overflow: hidden; background: #202020; }
    .desktop { flex: 1; min-height: 0; display: grid; grid-template: minmax(0, 1fr) / minmax(0, 1fr); }
    ide-window, browser-window { grid-area: 1 / 1; }
    browser-window { margin: 47px 68px 0 0; z-index: 1; }
    task-bar { z-index: 2; }
  `;

  render() {
    return html`
      <div class="desktop">
        <ide-window></ide-window>
        <browser-window></browser-window>
      </div>
      <task-bar></task-bar>`;
  }
}
